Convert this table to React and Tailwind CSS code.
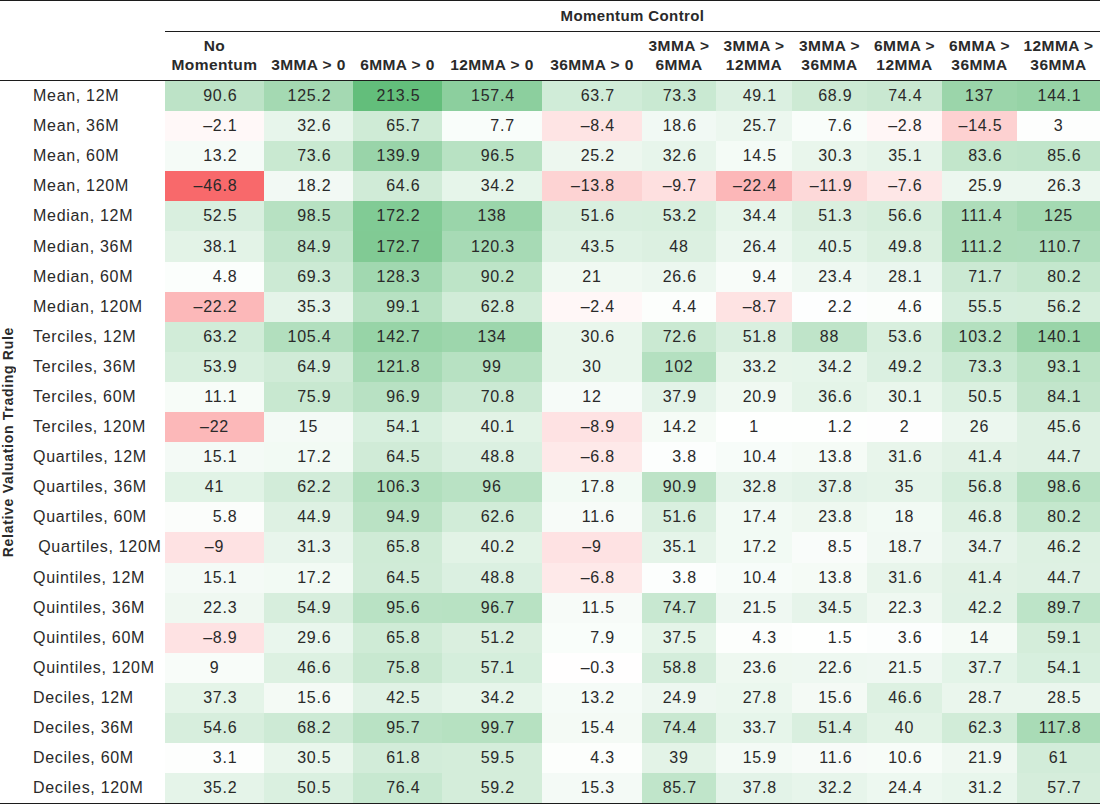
import React from "react";

const COLS = [
  { label: ["No", "Momentum"], w: 99 },
  { label: ["3MMA > 0"], w: 89 },
  { label: ["6MMA > 0"], w: 89 },
  { label: ["12MMA > 0"], w: 100 },
  { label: ["36MMA > 0"], w: 100 },
  { label: ["3MMA >", "6MMA"], w: 74 },
  { label: ["3MMA >", "12MMA"], w: 76 },
  { label: ["3MMA >", "36MMA"], w: 75 },
  { label: ["6MMA >", "12MMA"], w: 75 },
  { label: ["6MMA >", "36MMA"], w: 75 },
  { label: ["12MMA >", "36MMA"], w: 83 },
];

const ROWS = [
  ["Mean, 12M", "90.6 125.2 213.5 157.4 63.7 73.3 49.1 68.9 74.4 137 144.1"],
  ["Mean, 36M", "–2.1 32.6 65.7 7.7 –8.4 18.6 25.7 7.6 –2.8 –14.5 3"],
  ["Mean, 60M", "13.2 73.6 139.9 96.5 25.2 32.6 14.5 30.3 35.1 83.6 85.6"],
  ["Mean, 120M", "–46.8 18.2 64.6 34.2 –13.8 –9.7 –22.4 –11.9 –7.6 25.9 26.3"],
  ["Median, 12M", "52.5 98.5 172.2 138 51.6 53.2 34.4 51.3 56.6 111.4 125"],
  ["Median, 36M", "38.1 84.9 172.7 120.3 43.5 48 26.4 40.5 49.8 111.2 110.7"],
  ["Median, 60M", "4.8 69.3 128.3 90.2 21 26.6 9.4 23.4 28.1 71.7 80.2"],
  ["Median, 120M", "–22.2 35.3 99.1 62.8 –2.4 4.4 –8.7 2.2 4.6 55.5 56.2"],
  ["Terciles, 12M", "63.2 105.4 142.7 134 30.6 72.6 51.8 88 53.6 103.2 140.1"],
  ["Terciles, 36M", "53.9 64.9 121.8 99 30 102 33.2 34.2 49.2 73.3 93.1"],
  ["Terciles, 60M", "11.1 75.9 96.9 70.8 12 37.9 20.9 36.6 30.1 50.5 84.1"],
  ["Terciles, 120M", "–22 15 54.1 40.1 –8.9 14.2 1 1.2 2 26 45.6"],
  ["Quartiles, 12M", "15.1 17.2 64.5 48.8 –6.8 3.8 10.4 13.8 31.6 41.4 44.7"],
  ["Quartiles, 36M", "41 62.2 106.3 96 17.8 90.9 32.8 37.8 35 56.8 98.6"],
  ["Quartiles, 60M", "5.8 44.9 94.9 62.6 11.6 51.6 17.4 23.8 18 46.8 80.2"],
  [" Quartiles, 120M", "–9 31.3 65.8 40.2 –9 35.1 17.2 8.5 18.7 34.7 46.2"],
  ["Quintiles, 12M", "15.1 17.2 64.5 48.8 –6.8 3.8 10.4 13.8 31.6 41.4 44.7"],
  ["Quintiles, 36M", "22.3 54.9 95.6 96.7 11.5 74.7 21.5 34.5 22.3 42.2 89.7"],
  ["Quintiles, 60M", "–8.9 29.6 65.8 51.2 7.9 37.5 4.3 1.5 3.6 14 59.1"],
  ["Quintiles, 120M", "9 46.6 75.8 57.1 –0.3 58.8 23.6 22.6 21.5 37.7 54.1"],
  ["Deciles, 12M", "37.3 15.6 42.5 34.2 13.2 24.9 27.8 15.6 46.6 28.7 28.5"],
  ["Deciles, 36M", "54.6 68.2 95.7 99.7 15.4 74.4 33.7 51.4 40 62.3 117.8"],
  ["Deciles, 60M", "3.1 30.5 61.8 59.5 4.3 39 15.9 11.6 10.6 21.9 61"],
  ["Deciles, 120M", "35.2 50.5 76.4 59.2 15.3 85.7 37.8 32.2 24.4 31.2 57.7"],
].map(([label, vals]) => ({ label, vals: vals.split(" ") }));

const FS = 16;
const LS = 0.8;

function textWidth(s) {
  let w = 0;
  for (const ch of s) {
    if (ch === ".") w += 0.278 * FS + LS;
    else w += 0.556 * FS + LS;
  }
  return w;
}

const BOX = COLS.map((_, ci) => {
  let m = 0;
  for (const r of ROWS) {
    const s = r.vals[ci];
    if (s.includes(".")) m = Math.max(m, textWidth(s));
  }
  return Math.ceil(m) + 1;
});

function num(s) {
  return parseFloat(s.replace("–", "-"));
}

function bg(s) {
  const v = num(s);
  let r, g, b;
  if (v >= 0) {
    const t = Math.min(1, v / 213.5);
    r = 255 + (99 - 255) * t;
    g = 255 + (190 - 255) * t;
    b = 255 + (123 - 255) * t;
  } else {
    const t = Math.min(1, v / -46.8);
    r = 255 + (248 - 255) * t;
    g = 255 + (105 - 255) * t;
    b = 255 + (107 - 255) * t;
  }
  return `rgb(${Math.round(r)},${Math.round(g)},${Math.round(b)})`;
}

export default function App() {
  return (
    <div className="w-[1100px] h-[806px] bg-white font-['Liberation_Sans',Arial,sans-serif] text-[#2a2a2a] text-[16px] tracking-[0.8px] overflow-hidden">
      <div className="border-t border-[#1c1c1c]">
        {/* Header row 1 */}
        <div className="flex h-[31px]">
          <div className="w-[165px] shrink-0" />
          <div className="flex-1 border-b border-[#1c1c1c] text-center font-bold text-[15px] tracking-[0.4px] leading-[29px]">
            Momentum Control
          </div>
        </div>
        {/* Header row 2 */}
        <div className="flex h-[49px] items-end border-b border-[#1c1c1c] pb-[6px]">
          <div className="w-[165px] shrink-0" />
          {COLS.map((c, i) => (
            <div
              key={i}
              className="shrink-0 text-center font-bold text-[15.5px] tracking-[0.4px] leading-[19px] whitespace-nowrap"
              style={{ width: c.w }}
            >
              {c.label.map((l, j) => (
                <div key={j}>{l}</div>
              ))}
            </div>
          ))}
        </div>
        {/* Body */}
        <div className="flex border-b border-[#1c1c1c]">
          <div className="w-[16px] shrink-0 flex items-center justify-center">
            <div className="[writing-mode:vertical-rl] rotate-180 font-bold text-[14px] tracking-[0.7px] leading-[16px] whitespace-nowrap">
              Relative Valuation Trading Rule
            </div>
          </div>
          <div className="flex flex-col">
            {ROWS.map((row, ri) => (
              <div key={ri} className="flex h-[30.1px]">
                <div className="w-[149px] shrink-0 pl-[17px] flex items-center whitespace-pre tracking-[0.7px]">
                  {row.label}
                </div>
                {row.vals.map((v, ci) => (
                  <div
                    key={ci}
                    className="shrink-0 flex items-center justify-center"
                    style={{ width: COLS[ci].w, backgroundColor: bg(v) }}
                  >
                    {v.includes(".") ? (
                      <span className="inline-block text-right" style={{ width: BOX[ci] }}>
                        {v}
                      </span>
                    ) : (
                      <span>{v}</span>
                    )}
                  </div>
                ))}
              </div>
            ))}
          </div>
        </div>
      </div>
    </div>
  );
}
